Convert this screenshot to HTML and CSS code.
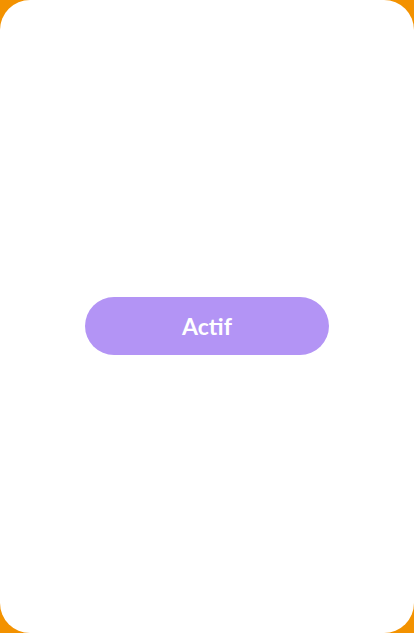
FILE: index.html
```html
<!DOCTYPE html>
<html lang="fr">
<head>
<meta charset="utf-8">
<title>Actif</title>
<link rel="stylesheet" href="styles.css">
</head>
<body>
<main class="card">
  <button class="btn" type="button">Actif</button>
</main>
</body>
</html>
```
FILE: styles.css
```css
html, body {
  margin: 0;
  padding: 0;
  height: 100%;
}
body {
  background: #f39200;
  font-family: "Lato", "Open Sans", sans-serif;
}
.card {
  box-sizing: border-box;
  height: 100%;
  background: #ffffff;
  border-radius: 30px;
  display: flex;
  align-items: center;
  justify-content: center;
  padding-top: 19px;
}
.btn {
  width: 244px;
  height: 58px;
  border: none;
  border-radius: 29px;
  background: #b394f5;
  color: #ffffff;
  font-family: "Lato", sans-serif;
  font-weight: 700;
  font-size: 23px;
  padding: 0;
  cursor: pointer;
}
```
